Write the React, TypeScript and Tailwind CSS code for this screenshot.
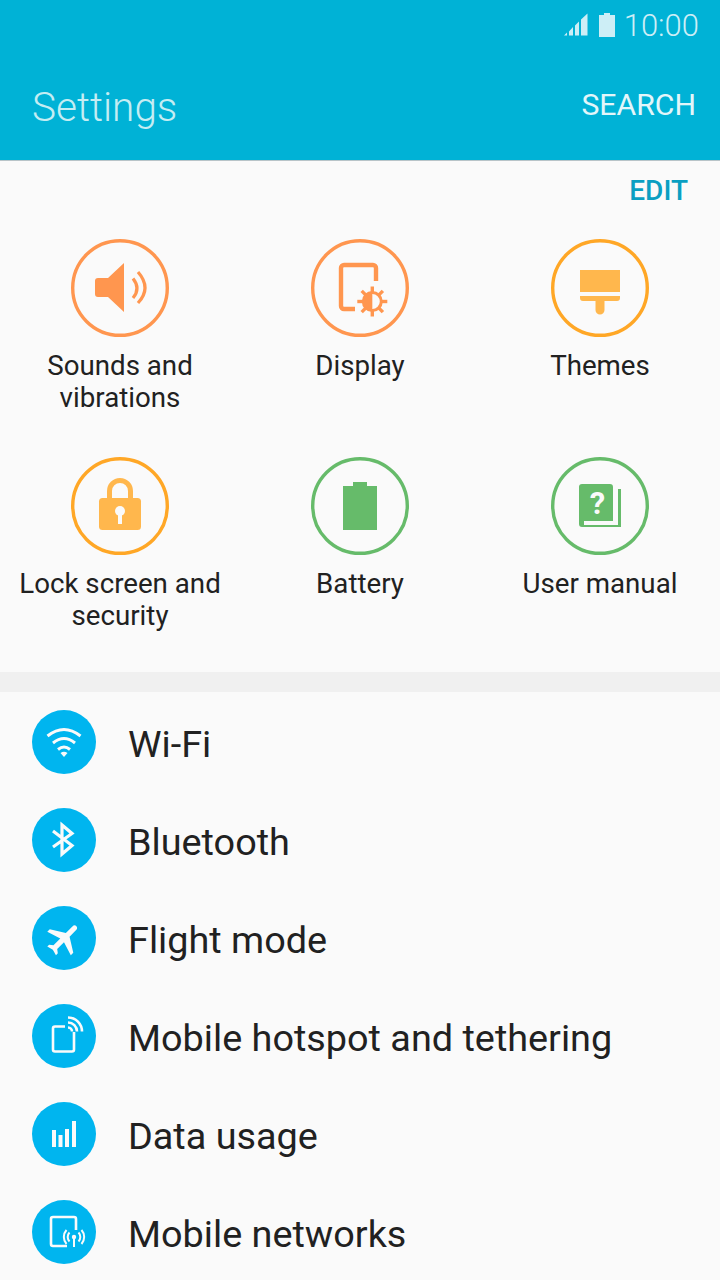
import React from "react";

const ORANGE = "#ff964f";
const AMBER = "#ffa726";
const AMBER_FILL = "#ffb74d";
const GREEN = "#66bb6a";

const Ring: React.FC<{ color: string; children: React.ReactNode }> = ({ color, children }) => (
  <svg width="98" height="98" viewBox="0 0 98 98" className="block">
    <circle cx="49" cy="49" r="47.3" fill="none" stroke={color} strokeWidth="3.4" />
    {children}
  </svg>
);

const SoundIcon = () => (
  <Ring color={ORANGE}>
    <path d="M24 42a3 3 0 0 1 3-3h10l16-15v49L37 58H27a3 3 0 0 1-3-3z" fill={ORANGE} />
    <path d="M62 39.500q8 10 0 19.500M67 33q14 16 0 31" fill="none" stroke={ORANGE} strokeWidth="3.200" />
  </Ring>
);

const DisplayIcon = () => {
  const teeth = [0, 45, 90, 135, 180, 225, 270, 315];
  return (
    <Ring color={ORANGE}>
      <path d="M65 42V29a3 3 0 0 0-3-3H33a3 3 0 0 0-3 3v38a3 3 0 0 0 3 3h11" fill="none" stroke={ORANGE} strokeWidth="4.400" />
      {teeth.map((a) => (
        <rect key={a} x="59.600" y="47.500" width="3.400" height="7" fill={ORANGE} transform={`rotate(${a} 61.300 62.500)`} />
      ))}
      <circle cx="61.300" cy="62.500" r="9" fill="#fafafa" stroke={ORANGE} strokeWidth="3" />
      <path d="M61.300 53.500a9 9 0 0 0 0 18z" fill={ORANGE} />
    </Ring>
  );
};

const ThemesIcon = () => (
  <Ring color={AMBER}>
    <rect x="29" y="31" width="40" height="22" fill={AMBER_FILL} />
    <path d="M29 57h40v2a3 3 0 0 1-3 3H53.500v9a4.500 4.500 0 0 1-9 0v-9H32a3 3 0 0 1-3-3z" fill={AMBER_FILL} />
  </Ring>
);

const LockIcon = () => (
  <Ring color={AMBER}>
    <path d="M38.500 42V34a10.500 10.500 0 0 1 21 0v8" fill="none" stroke={AMBER_FILL} strokeWidth="5" />
    <rect x="28" y="41" width="42" height="32" rx="3.500" fill={AMBER_FILL} />
    <circle cx="49" cy="54" r="5" fill="#fafafa" />
    <rect x="47" y="55" width="4" height="12" fill="#fafafa" />
  </Ring>
);

const BatteryIcon = () => (
  <Ring color={GREEN}>
    <path d="M42 25h14v4h10v44H32V29h10z" fill={GREEN} />
  </Ring>
);

const ManualIcon = () => (
  <Ring color={GREEN}>
    <path d="M31 27h28a3 3 0 0 1 3 3v34H33v4h29v2H31a3 3 0 0 1-3-3V30a3 3 0 0 1 3-3z" fill={GREEN} />
    <path d="M67 32h3v38H33v-2h34z" fill={GREEN} />
    <text x="46.500" y="56.500" textAnchor="middle" fontSize="31" fontWeight="700" fill="#fafafa" fontFamily="Roboto, sans-serif">?</text>
  </Ring>
);

const Disc: React.FC<{ children: React.ReactNode }> = ({ children }) => (
  <svg width="64" height="64" viewBox="0 0 64 64" className="block shrink-0">
    <circle cx="32" cy="32" r="32" fill="#00b5ef" />
    {children}
  </svg>
);

const WifiIcon = () => (
  <Disc>
    <g fill="none" stroke="#fafafa" strokeWidth="3">
      <path d="M15.500 26q16.500-13 33 0" />
      <path d="M21 33q11-9 22 0" />
      <path d="M26 39.500q6-5 12 0" />
    </g>
    <path d="M28.500 43q3.500-2.500 7 0L32 47z" fill="#fafafa" />
  </Disc>
);

const BluetoothIcon = () => (
  <Disc>
    <path d="M21 23l19 14.500-10 8.500V17l10 8.500L21 39" fill="none" stroke="#fafafa" strokeWidth="3.200" />
  </Disc>
);

const FlightIcon = () => (
  <Disc>
    <g transform="translate(32 32.500) rotate(45) scale(1.750) translate(-11.500 -12)">
      <path d="M21 16v-2l-8-5V3.500c0-.83-.67-1.500-1.500-1.500S10 2.670 10 3.500V9l-8 5v2l8-2.500V19l-2 1.500V22l3.500-1 3.500 1v-1.500L13 19v-5.500l8 2.500z" fill="#fafafa" />
    </g>
  </Disc>
);

const HotspotIcon = () => (
  <Disc>
    <path d="M33 22.500H23a2 2 0 0 0-2 2v21a2 2 0 0 0 2 2h17a2 2 0 0 0 2-2V28" fill="none" stroke="#fafafa" strokeWidth="2.600" />
    <path d="M36 23.500a4 4 0 0 1 4 4M36 18.500a9 9 0 0 1 9 9M36 13.500a14 14 0 0 1 14 14" fill="none" stroke="#fafafa" strokeWidth="2.600" />
  </Disc>
);

const DataIcon = () => (
  <Disc>
    <rect x="20" y="28" width="4" height="17" fill="#fafafa" />
    <rect x="26.500" y="33" width="4" height="12" fill="#fafafa" />
    <rect x="33" y="27" width="4" height="18" fill="#fafafa" />
    <rect x="40" y="19" width="4" height="26" fill="#fafafa" />
  </Disc>
);

const NetworksIcon = () => (
  <Disc>
    <path d="M44 30V19a2 2 0 0 0-2-2H21a2 2 0 0 0-2 2v25a2 2 0 0 0 2 2h14" fill="none" stroke="#fafafa" strokeWidth="2.600" />
    <circle cx="42" cy="37" r="2.200" fill="#fafafa" />
    <rect x="41" y="37" width="2" height="10" fill="#fafafa" />
    <path d="M37.500 32.500a6.500 6.500 0 0 0 0 9M46.500 32.500a6.500 6.500 0 0 1 0 9M34.500 30a10.500 10.500 0 0 0 0 14M49.500 30a10.500 10.500 0 0 1 0 14" fill="none" stroke="#fafafa" strokeWidth="2" />
  </Disc>
);

const tiles = [
  { label: "Sounds and vibrations", icon: <SoundIcon /> },
  { label: "Display", icon: <DisplayIcon /> },
  { label: "Themes", icon: <ThemesIcon /> },
  { label: "Lock screen and security", icon: <LockIcon /> },
  { label: "Battery", icon: <BatteryIcon /> },
  { label: "User manual", icon: <ManualIcon /> },
];

const rows = [
  { label: "Wi-Fi", icon: <WifiIcon /> },
  { label: "Bluetooth", icon: <BluetoothIcon /> },
  { label: "Flight mode", icon: <FlightIcon /> },
  { label: "Mobile hotspot and tethering", icon: <HotspotIcon /> },
  { label: "Data usage", icon: <DataIcon /> },
  { label: "Mobile networks", icon: <NetworksIcon /> },
];

export default function App() {
  return (
    <div className="w-[720px] h-[1280px] overflow-hidden bg-[#fafafa] font-['Roboto',sans-serif]">
      {/* Header */}
      <div className="h-[161px] bg-[#00b2d6] border-b border-[#b8c4c8] flex flex-col">
        <div className="h-[50px] flex items-center justify-end pr-[21px] gap-[9px]">
          <svg width="26" height="26" viewBox="0 0 26 26" className="block">
            <path d="M0 23.500h3v-3zM5 23.500h4V15l-4 4.500zM11 23.500h4V9.500l-4 4zM17 23.500h6.500V1.500L17 7.500z" fill="#cdeef6" />
          </svg>
          <svg width="16" height="24" viewBox="0 0 16 24" className="block">
            <path d="M5 0h6v2h5v22H0V2h5z" fill="#cdeef6" />
          </svg>
          <span className="text-[31px] leading-none font-light text-[#cdeef6]">10:00</span>
        </div>
        <div className="flex-1 flex items-start justify-between pl-[32px] pr-[24px] pt-[33px]">
          <span className="text-[40.500px] leading-[48px] font-light text-[#c4edf3]">Settings</span>
          <span className="text-[30.200px] leading-[44px] text-[#e3f6fa]">SEARCH</span>
        </div>
      </div>

      {/* Shortcuts */}
      <div className="h-[511px]">
        <div className="h-[78px] flex justify-end pr-[32px] pt-[14px]">
          <span className="text-[28px] leading-[32px] font-medium text-[#0a9fc2]">EDIT</span>
        </div>
        <div className="grid grid-cols-3">
          {tiles.map((t) => (
            <div key={t.label} className="h-[218px] flex flex-col items-center">
              {t.icon}
              <div className="mt-[13px] px-[10px] text-center text-[27.700px] leading-[32px] text-[#212121]">{t.label}</div>
            </div>
          ))}
        </div>
      </div>

      <div className="h-[20px] bg-[#f0f0f0]" />

      {/* List */}
      <div className="pt-px">
        {rows.map((r) => (
          <div key={r.label} className="h-[98px] flex items-center pl-[32px] gap-[32px]">
            {r.icon}
            <span className="mt-[4px] text-[37.800px] leading-[48px] text-[#212121]">{r.label}</span>
          </div>
        ))}
      </div>
    </div>
  );
}
